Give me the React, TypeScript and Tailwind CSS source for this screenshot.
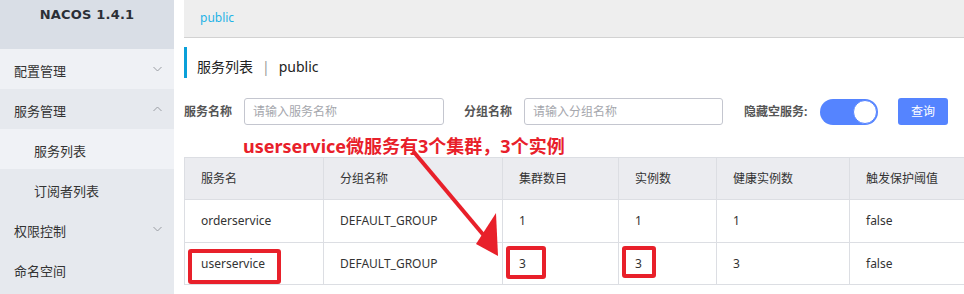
import React from "react";

const font = { fontFamily: '"Noto Sans", "Noto Sans CJK SC", sans-serif' };

function Chevron({ up }: { up?: boolean }) {
  return (
    <svg width="9" height="6" viewBox="0 0 9 6" className="text-[#9a9da3]">
      {up ? (
        <path d="M0.5 5 L4.5 1 L8.5 5" fill="none" stroke="currentColor" strokeWidth="1" />
      ) : (
        <path d="M0.5 1 L4.5 5 L8.5 1" fill="none" stroke="currentColor" strokeWidth="1" />
      )}
    </svg>
  );
}

const menu: { label: string; sub?: boolean; chevron?: "up" | "down"; bg: string }[] = [
  { label: "配置管理", chevron: "down", bg: "bg-[#eff1f5]" },
  { label: "服务管理", chevron: "up", bg: "bg-[#e6e9ee]" },
  { label: "服务列表", sub: true, bg: "bg-[#f0f2f6]" },
  { label: "订阅者列表", sub: true, bg: "bg-[#e6e9ee]" },
  { label: "权限控制", chevron: "down", bg: "bg-[#e6e9ee]" },
  { label: "命名空间", bg: "bg-[#e6e9ee]" },
];

const cols = [
  { title: "服务名", w: "w-[139px]" },
  { title: "分组名称", w: "w-[179px]" },
  { title: "集群数目", w: "w-[116px]" },
  { title: "实例数", w: "w-[98px]" },
  { title: "健康实例数", w: "w-[133px]" },
  { title: "触发保护阈值", w: "w-[140px]" },
];

const rows = [
  ["orderservice", "DEFAULT_GROUP", "1", "1", "1", "false"],
  ["userservice", "DEFAULT_GROUP", "3", "3", "3", "false"],
];

export default function App() {
  return (
    <div
      className="relative flex w-[964px] h-[294px] overflow-hidden bg-white text-[#333]"
      style={font}
    >
      {/* Sidebar */}
      <aside className="w-[174px] shrink-0 bg-[#e6e9ee] flex flex-col">
        <div className="h-[49px] bg-[#d9dee6] flex justify-center pt-[5px]">
          <span
            className="font-bold text-[#2b2f36] tracking-[0.2px]"
            style={{ fontFamily: '"DejaVu Sans", sans-serif', fontSize: "13px" }}
          >
            NACOS 1.4.1
          </span>
        </div>
        {menu.map((m) => (
          <div
            key={m.label}
            className={`h-[40px] flex items-center justify-between ${m.bg} ${
              m.sub ? "pl-[34px]" : "pl-[14px]"
            } pr-[12px] text-[13px] text-[#333]`}
          >
            <span className="pt-[5px]">{m.label}</span>
            {m.chevron && <Chevron up={m.chevron === "up"} />}
          </div>
        ))}
      </aside>

      {/* Main */}
      <main className="flex-1 pl-[10px] flex flex-col min-w-0">
        <div className="h-[38px] bg-[#eeeeee] border-b border-[#d2d2d2] flex items-center pl-[16px] pb-[2px] text-[12px] text-[#1fb3e6]">
          public
        </div>

        <div className="mt-[9px] h-[31px] border-l-[3px] border-[#0aa0d9] pl-[10px] pt-[7px] flex items-center text-[14px] text-[#222]">
          <span>服务列表</span>
          <span className="mx-[9px] text-[#999]">|</span>
          <span>public</span>
        </div>

        <div className="mt-[20px] flex items-center h-[27px] text-[12px]">
          <span className="w-[60px] font-bold text-[#555]">服务名称</span>
          <div className="w-[200px] h-[27px] border border-[#c4c6cf] rounded-[3px] flex items-center pl-[8px] text-[#a5a7ad]">
            请输入服务名称
          </div>
          <span className="ml-[20px] w-[60px] font-bold text-[#555]">分组名称</span>
          <div className="w-[199px] h-[27px] border border-[#c4c6cf] rounded-[3px] flex items-center pl-[8px] text-[#a5a7ad]">
            请输入分组名称
          </div>
          <span className="ml-[21px] w-[76px] font-bold text-[#555]">隐藏空服务:</span>
          <div className="w-[58px] h-[26px] rounded-full bg-[#5584ff] flex items-center justify-end pr-[1px]">
            <div className="w-[24px] h-[24px] rounded-full bg-white border border-[#5584ff]" />
          </div>
          <div className="ml-[20px] w-[50px] h-[27px] rounded-[3px] bg-[#5584ff] text-white flex items-center justify-center">
            查询
          </div>
        </div>

        <table className="mt-[32px] border-collapse table-fixed w-[805px] text-[12px] text-[#333]">
          <thead>
            <tr className="h-[42px] bg-[#ebecf0]">
              {cols.map((c) => (
                <th
                  key={c.title}
                  className={`${c.w} border border-[#dcdee3] text-left font-normal pl-[16px]`}
                >
                  {c.title}
                </th>
              ))}
            </tr>
          </thead>
          <tbody>
            {rows.map((r, i) => (
              <tr key={i} className={i === 0 ? "h-[43px]" : "h-[42px]"}>
                {r.map((v, j) => (
                  <td key={j} className="border border-[#dcdee3] pl-[16px]">
                    {v}
                  </td>
                ))}
              </tr>
            ))}
          </tbody>
        </table>
      </main>

      {/* Annotations */}
      <div className="absolute left-[243px] top-[135px] text-[18px] font-bold text-[#e8202a] whitespace-nowrap leading-[22px]">
        userservice微服务有3个集群，3个实例
      </div>
      <div className="absolute left-[188px] top-[249px] w-[93px] h-[35px] border-[4px] border-[#e8202a] rounded-[3px]" />
      <div className="absolute left-[506px] top-[246px] w-[40px] h-[33px] border-[4px] border-[#e8202a] rounded-[3px]" />
      <div className="absolute left-[622px] top-[246px] w-[34px] h-[32px] border-[4px] border-[#e8202a] rounded-[3px]" />
      <svg className="absolute left-0 top-0 pointer-events-none" width="964" height="294">
        <line x1="413" y1="151" x2="486" y2="238" stroke="#e8202a" strokeWidth="4" />
        <polygon points="498,256 476,244 496,213" fill="#e8202a" />
      </svg>
    </div>
  );
}
